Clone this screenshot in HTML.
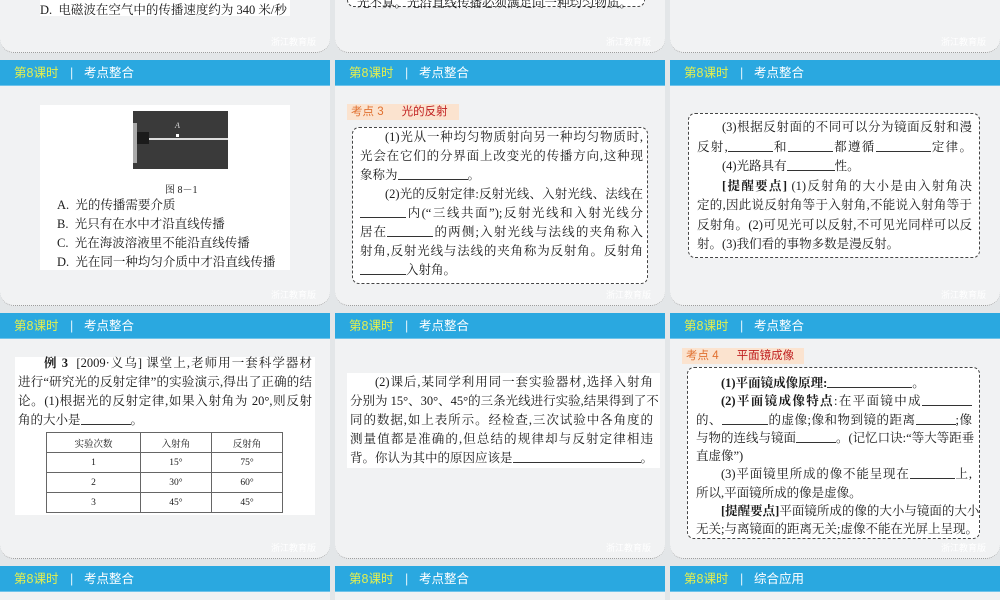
<!DOCTYPE html>
<html><head><meta charset="utf-8">
<style>
*{margin:0;padding:0;box-sizing:border-box}
html,body{width:1000px;height:600px;overflow:hidden}
body{background:#e3e6e8;position:relative;font-family:"Liberation Serif","Noto Serif CJK SC","Noto Sans CJK SC",serif;color:#1a1a1a}
.s{position:absolute;width:330px;height:246px;background:#f1f2f3;border-bottom:1px dotted #999;border-radius:0 0 14px 14px;overflow:hidden}
.s.last{height:34px;border-bottom:none;border-radius:0}
.hd{position:absolute;left:0;top:0;width:330px;height:26px;background:#2aa8e0;border-bottom:1px solid #6fc3ea;font-family:"Liberation Sans","Noto Sans CJK SC",sans-serif;font-size:12.5px;line-height:26px}
.hd .a{position:absolute;left:14px;color:#e4ef4e}
.hd .b{position:absolute;left:70px;color:#dff3fb}
.hd .c{position:absolute;left:84px;color:#fff}
.ab{position:absolute}
.w{position:absolute;background:#fff}
.L{font-size:12.5px;height:19px;line-height:19px;white-space:nowrap;text-align:justify;text-align-last:justify}
.L.n{text-align-last:left}
.box{position:absolute;border:1.5px dashed #444;border-radius:7px;background:#fff}
.u{display:inline-block;border-bottom:1px solid #333;height:12px;vertical-align:-1px}
.tag{position:absolute;height:16px;background:#fbe3cf;font-family:"Liberation Sans","Noto Sans CJK SC",sans-serif;font-size:11.5px;line-height:16px;color:#e07030;padding-left:4px}
.tag b{font-weight:normal;color:#c02020;margin-left:18px}
table{border-collapse:collapse;font-size:9.5px;text-align:center}
td{border:1px solid #666;height:20px}
.wm{position:absolute;right:14px;bottom:4px;font-size:9px;color:#fff;font-family:"Liberation Sans","Noto Sans CJK SC",sans-serif}
</style></head><body>

<div class="s" style="left:0;top:-193px"><div class="w" style="left:40px;top:185px;width:250px;height:24px"></div>
<div class="ab" style="left:40px;top:193px;font-size:12.5px">D.&nbsp; 电磁波在空气中的传播速度约为 340 米/秒</div><div class="wm">浙江教育版</div></div>
<div class="s" style="left:335px;top:-193px"><div class="box" style="left:12px;top:170px;width:298px;height:30px;border-top:none;border-radius:0 0 7px 7px"></div>
<div class="ab" style="left:22px;top:186px;font-size:12.5px">光不算。光沿直线传播必须满足同一种均匀物质。</div><div class="wm">浙江教育版</div></div>
<div class="s" style="left:670px;top:-193px"><div class="wm">浙江教育版</div></div>

<div class="s" style="left:0;top:60px"><div class="hd"><span class="a">第8课时</span><span class="b">|</span><span class="c">考点整合</span></div>
<div class="w" style="left:40px;top:45px;width:250px;height:165px"></div>
<div class="ab" style="left:133px;top:51px;width:95px;height:58px;background:#3a3a3a"><div class="ab" style="left:0;top:12px;width:4px;height:40px;background:#aaa"></div><div class="ab" style="left:4px;top:21px;width:12px;height:12px;background:#1b1b1b"></div><div class="ab" style="left:16px;top:27px;width:79px;height:2px;background:#ddd"></div><div class="ab" style="left:43px;top:23px;width:3px;height:3px;background:#fff"></div><div class="ab" style="left:42px;top:10px;font-size:8px;color:#ddd;font-style:italic">A</div></div>
<div class="ab" style="left:165px;top:121px;font-size:10px">图 8－1</div>
<div class="ab" style="left:57px;top:136px;font-size:12.5px;line-height:19px">A.&nbsp; 光的传播需要介质<br>B.&nbsp; 光只有在水中才沿直线传播<br>C.&nbsp; 光在海波溶液里不能沿直线传播<br>D.&nbsp; 光在同一种均匀介质中才沿直线传播</div>
<div class="wm">浙江教育版</div></div>

<div class="s" style="left:335px;top:60px"><div class="hd"><span class="a">第8课时</span><span class="b">|</span><span class="c">考点整合</span></div>
<div class="tag" style="left:12px;top:44px;width:112px">考点 3<b>光的反射</b></div>
<div class="box" style="left:17px;top:67px;width:296px;height:157px"></div>
<div class="ab" style="left:25px;top:68px;width:283px">
<div class="L">&emsp;&emsp;(1)光从一种均匀物质射向另一种均匀物质时,</div>
<div class="L">光会在它们的分界面上改变光的传播方向,这种现</div>
<div class="L n">象称为<span class="u" style="width:70px"></span>。</div>
<div class="L">&emsp;&emsp;(2)光的反射定律:反射光线、入射光线、法线在</div>
<div class="L"><span class="u" style="width:46px"></span>内(“三线共面”);反射光线和入射光线分</div>
<div class="L">居在<span class="u" style="width:46px"></span>的两侧;入射光线与法线的夹角称入</div>
<div class="L">射角,反射光线与法线的夹角称为反射角。反射角</div>
<div class="L n"><span class="u" style="width:46px"></span>入射角。</div></div>
<div class="wm">浙江教育版</div></div>

<div class="s" style="left:670px;top:60px"><div class="hd"><span class="a">第8课时</span><span class="b">|</span><span class="c">考点整合</span></div>
<div class="box" style="left:18px;top:53px;width:292px;height:145px"></div>
<div class="ab" style="left:27px;top:58px;width:275px">
<div class="L" style="height:19.5px">&emsp;&emsp;(3)根据反射面的不同可以分为镜面反射和漫</div>
<div class="L" style="height:19.5px">反射,<span class="u" style="width:45px"></span>和<span class="u" style="width:45px"></span>都遵循<span class="u" style="width:55px"></span>定律。</div>
<div class="L n" style="height:19.5px">&emsp;&emsp;(4)光路具有<span class="u" style="width:48px"></span>性。</div>
<div class="L" style="height:19.5px">&emsp;&emsp;<b>[提醒要点]</b>&nbsp;(1)反射角的大小是由入射角决</div>
<div class="L" style="height:19.5px">定的,因此说反射角等于入射角,不能说入射角等于</div>
<div class="L" style="height:19.5px">反射角。(2)可见光可以反射,不可见光同样可以反</div>
<div class="L n" style="height:19.5px">射。(3)我们看的事物多数是漫反射。</div></div>
<div class="wm">浙江教育版</div></div>

<div class="s" style="left:0;top:313px"><div class="hd"><span class="a">第8课时</span><span class="b">|</span><span class="c">考点整合</span></div>
<div class="w" style="left:15px;top:44px;width:300px;height:158px"></div>
<div class="ab" style="left:18px;top:41px;width:294px">
<div class="L">&emsp;&emsp;<b>例 3</b>&nbsp; [2009·义乌] 课堂上,老师用一套科学器材</div>
<div class="L">进行“研究光的反射定律”的实验演示,得出了正确的结</div>
<div class="L">论。(1)根据光的反射定律,如果入射角为 20°,则反射</div>
<div class="L n">角的大小是<span class="u" style="width:50px"></span>。</div></div>
<table class="ab" style="left:46px;top:119px;width:237px"><tr><td>实验次数</td><td>入射角</td><td>反射角</td></tr><tr><td>1</td><td>15°</td><td>75°</td></tr><tr><td>2</td><td>30°</td><td>60°</td></tr><tr><td>3</td><td>45°</td><td>45°</td></tr></table>
<div class="wm">浙江教育版</div></div>

<div class="s" style="left:335px;top:313px"><div class="hd"><span class="a">第8课时</span><span class="b">|</span><span class="c">考点整合</span></div>
<div class="w" style="left:12px;top:60px;width:313px;height:95px"></div>
<div class="ab" style="left:15px;top:60px;width:303px">
<div class="L">&emsp;&emsp;(2)课后,某同学利用同一套实验器材,选择入射角</div>
<div class="L">分别为 15°、30°、45°的三条光线进行实验,结果得到了不</div>
<div class="L">同的数据,如上表所示。经检查,三次试验中各角度的</div>
<div class="L">测量值都是准确的,但总结的规律却与反射定律相违</div>
<div class="L">背。你认为其中的原因应该是<span class="u" style="width:128px"></span>。</div></div>
<div class="wm">浙江教育版</div></div>

<div class="s" style="left:670px;top:313px"><div class="hd"><span class="a">第8课时</span><span class="b">|</span><span class="c">考点整合</span></div>
<div class="tag" style="left:12px;top:35px;width:122px">考点 4<b>平面镜成像</b></div>
<div class="box" style="left:17px;top:54px;width:293px;height:172px"></div>
<div class="ab" style="left:26px;top:61px;width:276px">
<div class="L n" style="height:18.3px">&emsp;&emsp;<b>(1)平面镜成像原理:</b><span class="u" style="width:85px"></span>。</div>
<div class="L" style="height:18.3px">&emsp;&emsp;<b>(2)平面镜成像特点</b>:在平面镜中成<span class="u" style="width:50px"></span></div>
<div class="L" style="height:18.3px">的、<span class="u" style="width:46px"></span>的虚像;像和物到镜的距离<span class="u" style="width:40px"></span>;像</div>
<div class="L" style="height:18.3px">与物的连线与镜面<span class="u" style="width:40px"></span>。(记忆口诀:“等大等距垂</div>
<div class="L n" style="height:18.3px">直虚像”)</div>
<div class="L" style="height:18.3px">&emsp;&emsp;(3)平面镜里所成的像不能呈现在<span class="u" style="width:45px"></span>上,</div>
<div class="L n" style="height:18.3px">所以,平面镜所成的像是虚像。</div>
<div class="L" style="height:18.3px">&emsp;&emsp;<b>[提醒要点]</b>平面镜所成的像的大小与镜面的大小</div>
<div class="L" style="height:18.3px">无关;与离镜面的距离无关;虚像不能在光屏上呈现。</div></div>
<div class="wm">浙江教育版</div></div>

<div class="s last" style="left:0;top:566px"><div class="hd"><span class="a">第8课时</span><span class="b">|</span><span class="c">考点整合</span></div></div>
<div class="s last" style="left:335px;top:566px"><div class="hd"><span class="a">第8课时</span><span class="b">|</span><span class="c">考点整合</span></div></div>
<div class="s last" style="left:670px;top:566px"><div class="hd"><span class="a">第8课时</span><span class="b">|</span><span class="c">综合应用</span></div></div>
</body></html>
